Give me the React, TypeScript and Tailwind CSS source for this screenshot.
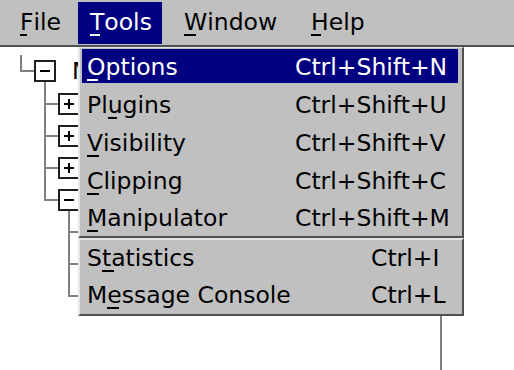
import React from "react";

const FONT = "[font-family:'DejaVu_Sans','Liberation_Sans',sans-serif]";

function U({ children, w }: { children: string; w: string }) {
  return (
    <span className="relative">
      {children}
      <span className={`absolute left-0 top-[26px] h-[2px] bg-current ${w}`} />
    </span>
  );
}

type Kind = "empty" | "corner" | "tee" | "boxPlus" | "boxMinus";

function Cell({ kind, h }: { kind: Kind; h: number }) {
  const g = "#808080";
  return (
    <svg width={24} height={h} className="block shrink-0">
      {kind === "corner" && <path d="M12 0V16H24" stroke={g} strokeWidth={2} fill="none" />}
      {kind === "tee" && <path d={`M12 0V${h}M12 16H24`} stroke={g} strokeWidth={2} fill="none" />}
      {(kind === "boxPlus" || kind === "boxMinus") && (
        <>
          <path d="M0 16H2" stroke={g} strokeWidth={2} />
          {kind === "boxMinus" && <path d={`M12 27V${h}`} stroke={g} strokeWidth={2} />}
          <rect x={2} y={6} width={20} height={20} fill="#ffffff" stroke="#1e1e1e" strokeWidth={2} />
          <path d="M7 16H17" stroke="#000" strokeWidth={2} />
          {kind === "boxPlus" && <path d="M12 11V21" stroke="#000" strokeWidth={2} />}
        </>
      )}
    </svg>
  );
}

const treeRows: { h: number; cells: Kind[]; label?: string }[] = [
  { h: 33, cells: ["corner", "boxMinus"], label: "Main" },
  { h: 32, cells: ["empty", "tee", "boxPlus"] },
  { h: 32, cells: ["empty", "tee", "boxPlus"] },
  { h: 32, cells: ["empty", "tee", "boxPlus"] },
  { h: 32, cells: ["empty", "corner", "boxMinus"] },
  { h: 32, cells: ["empty", "empty", "tee"] },
  { h: 32, cells: ["empty", "empty", "tee"] },
  { h: 32, cells: ["empty", "empty", "corner"] },
];

function MenuRow({
  active,
  tall,
  labelW,
  label,
  accel,
}: {
  active?: boolean;
  tall: boolean;
  labelW: string;
  label: React.ReactNode;
  accel: string;
}) {
  return (
    <div
      className={`relative flex pl-[7px] ${tall ? "h-[38px] leading-[38px]" : "h-[36px] leading-[36px]"} ${
        active ? "text-white" : "text-black"
      }`}
    >
      {active && <div className="absolute top-[1px] bottom-[3px] left-[2px] right-[4px] bg-[#000080]" />}
      <div className={`relative whitespace-nowrap ${labelW}`}>{label}</div>
      <div className="relative whitespace-nowrap">{accel}</div>
    </div>
  );
}

export default function App() {
  return (
    <div className={`relative w-full h-[370px] overflow-hidden bg-white text-[23.5px] ${FONT}`}>
      {/* Menu bar */}
      <div className="flex h-[47px] bg-[#c0c0c0] border-b-2 border-[#505050] leading-[28px] text-black">
        <div className="w-[70px] ml-[8px] pl-[12px] pt-[8px]">
          <U w="w-[7px]">F</U>ile
        </div>
        <div className="w-[84px] h-[42px] mt-[2px] pl-[12px] pt-[6px] bg-[#000080] text-white">
          <U w="w-[10px]">T</U>ools
        </div>
        <div className="w-[137px] pl-[22px] pt-[8px]">
          <U w="w-[12px]">W</U>indow
        </div>
        <div className="pl-[12px] pt-[8px]">
          <U w="w-[10px]">H</U>elp
        </div>
      </div>

      {/* Tree */}
      <div className="pl-[9px] pt-[8px]">
        {treeRows.map((r, i) => (
          <div key={i} className="flex" style={{ height: r.h }}>
            {r.cells.map((c, j) => (
              <Cell key={j} kind={c} h={r.h} />
            ))}
            {r.label && (
              <div className="ml-[15px] whitespace-nowrap leading-[32px] text-black">{r.label}</div>
            )}
          </div>
        ))}
      </div>

      {/* line of a widget below the menu */}
      <div className="absolute left-[440px] top-[280px] w-[2px] h-[90px] bg-[#808080]" />

      {/* Tools dropdown: first group */}
      <div className="absolute left-[78px] top-[47px] w-[386px] bg-[#c0c0c0] border-t border-l-2 border-r-2 border-b-2 border-t-[#e6e6e6] border-l-[#e6e6e6] border-r-[#505050] border-b-[#505050]">
        <MenuRow active tall labelW="w-[208px]" label={<><U w="w-[11px]">O</U>ptions</>} accel="Ctrl+Shift+N" />
        <MenuRow tall labelW="w-[208px]" label={<>Pl<U w="w-[9px]">u</U>gins</>} accel="Ctrl+Shift+U" />
        <MenuRow tall labelW="w-[208px]" label={<><U w="w-[12px]">V</U>isibility</>} accel="Ctrl+Shift+V" />
        <MenuRow tall labelW="w-[208px]" label={<><U w="w-[12px]">C</U>lipping</>} accel="Ctrl+Shift+C" />
        <MenuRow tall={false} labelW="w-[208px]" label={<><U w="w-[11px]">M</U>anipulator</>} accel="Ctrl+Shift+M" />
      </div>

      {/* Tools dropdown: second group */}
      <div className="absolute left-[78px] top-[238px] w-[386px] bg-[#c0c0c0] border-t-2 border-l-2 border-r-2 border-b-2 border-t-[#e6e6e6] border-l-[#e6e6e6] border-r-[#505050] border-b-[#505050]">
        <MenuRow tall={false} labelW="w-[284px]" label={<>S<U w="w-[12px]">t</U>atistics</>} accel="Ctrl+I" />
        <MenuRow tall labelW="w-[284px]" label={<>M<U w="w-[12px]">e</U>ssage Console</>} accel="Ctrl+L" />
      </div>
    </div>
  );
}
